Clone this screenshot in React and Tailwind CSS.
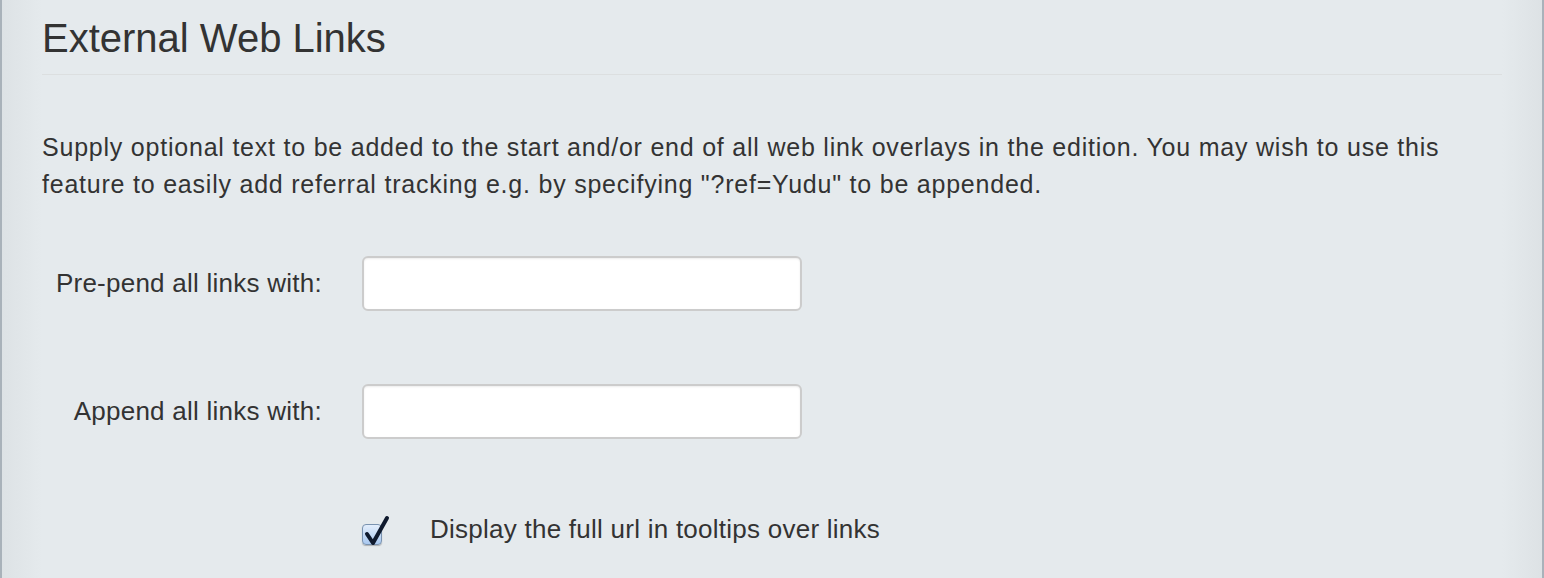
export default function App() {
  return (
    <div className="w-[1544px] h-[578px] overflow-hidden bg-[#e5eaed] flex" style={{ fontFamily: '"Liberation Sans", Arial, sans-serif' }}>
      <div className="w-[2px] bg-[#a9b2ba]" />
      <div className="flex-1 relative bg-[linear-gradient(to_right,#dde2e5_0px,#e5eaed_40px,#e5eaed_calc(100%-40px),#dde2e5_100%)]">
        <div className="pl-[40px] pr-[40px] text-[#333]">
          <h1 className="text-[40px] leading-[44px] pt-[16px] pb-[14px] border-b border-[#dcdfe0] text-[#333]">External Web Links</h1>
          <p className="mt-[54px] text-[25px] tracking-[0.78px] leading-[37px] text-[#333]">
            Supply optional text to be added to the start and/or end of all web link overlays in the edition. You may wish to use this feature to easily add referral tracking e.g. by specifying "?ref=Yudu" to be appended.
          </p>
          <div className="mt-[53px] flex items-center">
            <label className="w-[280px] text-right text-[26px] tracking-[0.25px] text-[#333]">Pre-pend all links with:</label>
            <input className="ml-[40px] w-[440px] h-[55px] bg-white border-2 border-[#cccccc] rounded-[6px] shadow-[inset_0_1px_2px_rgba(0,0,0,0.08)]" />
          </div>
          <div className="mt-[73px] flex items-center">
            <label className="w-[280px] text-right text-[26px] tracking-[0.25px] text-[#333]">Append all links with:</label>
            <input className="ml-[40px] w-[440px] h-[55px] bg-white border-2 border-[#cccccc] rounded-[6px] shadow-[inset_0_1px_2px_rgba(0,0,0,0.08)]" />
          </div>
          <div className="mt-[71px] flex items-center">
            <div className="ml-[320px] w-[20px] h-[21px] mt-[9px] rounded-[4px] border border-[#7a93b0] bg-[linear-gradient(#e3eefc,#a9c8ef)] relative shadow-[0_1px_1px_rgba(0,0,0,0.25)]">
              <svg viewBox="0 0 28 30" className="absolute -top-[9px] -left-[1px] w-[28px] h-[30px] overflow-visible">
                <path d="M5 18 L11 27 L25 2" fill="none" stroke="#0f1a2e" strokeWidth="4" strokeLinecap="round" strokeLinejoin="round" />
              </svg>
            </div>
            <span className="ml-[48px] text-[26px] tracking-[0.25px] text-[#333]">Display the full url in tooltips over links</span>
          </div>
        </div>
      </div>
      <div className="w-[2px] bg-[#a9b2ba]" />
    </div>
  );
}
